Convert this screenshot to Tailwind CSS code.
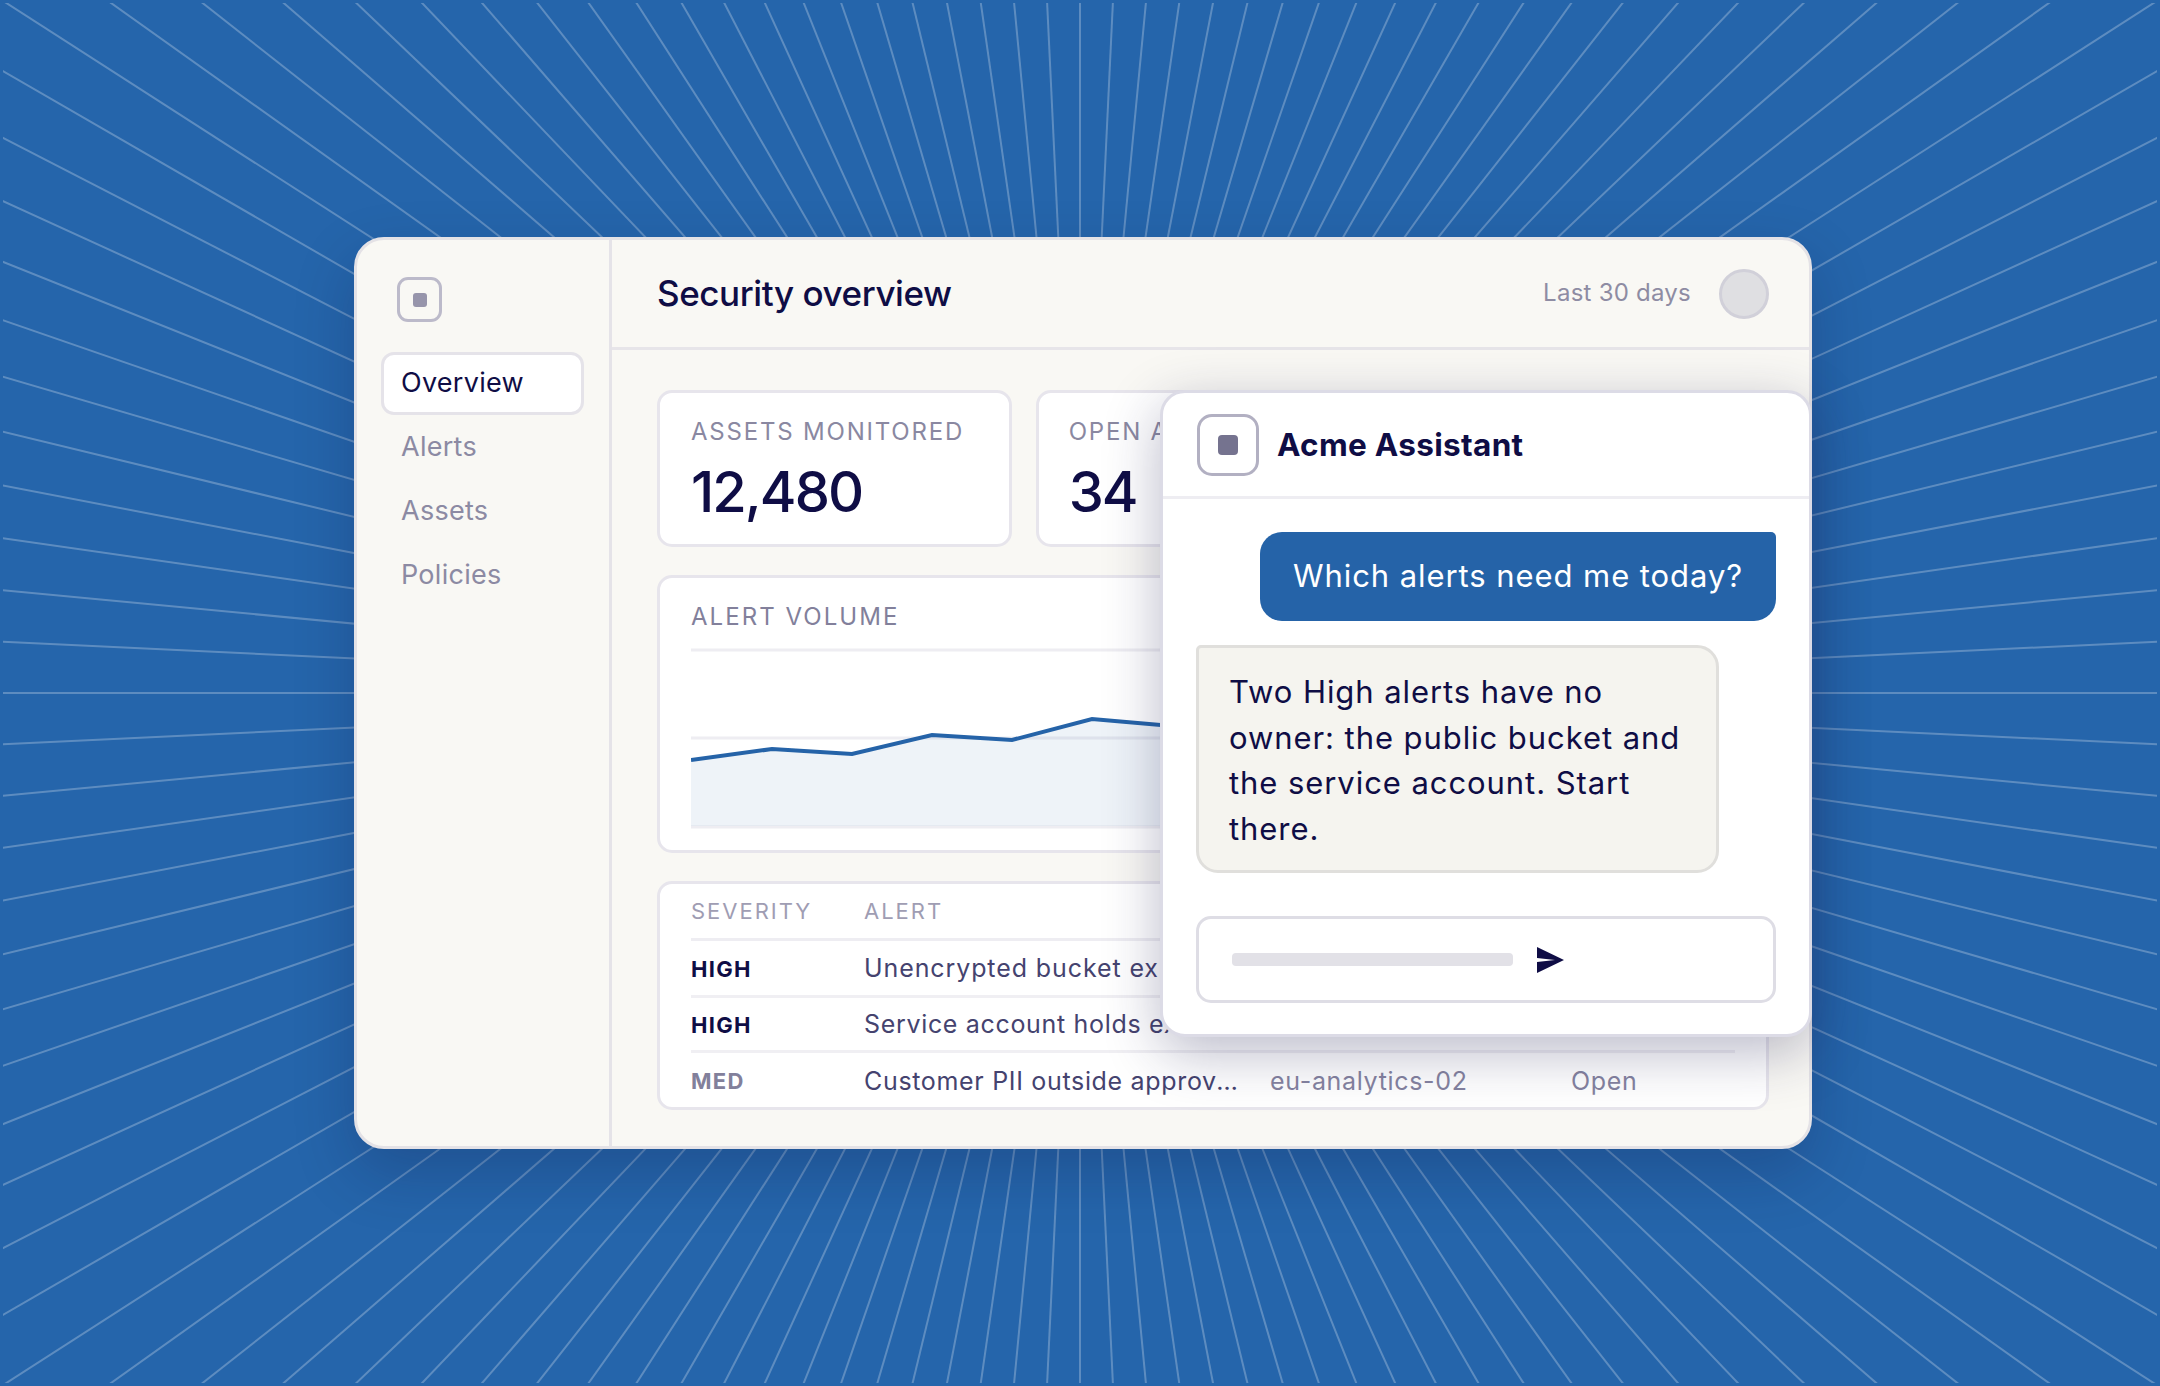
<!DOCTYPE html>
<html lang="en">
<head>
  <meta charset="UTF-8" />
  <title>Security overview</title>
  <script src="https://cdn.jsdelivr.net/npm/@tailwindcss/browser@4"></script>
</head>
<body class="bg-[#2565ab] w-[2160px] h-[1386px] overflow-hidden relative font-['Inter',sans-serif] text-[#0f0d45]">
  <!-- rays -->
  <svg id="rays" class="absolute inset-0" width="2160" height="1386"></svg>

  <main class="relative pl-[354px] pt-[237px]">
    <div class="relative flex w-[1458px] h-[912px] rounded-[30px] border-[3px] border-[#e4e2e6] bg-[#f9f8f4] shadow-[0_24px_60px_rgba(12,20,60,0.22)]">

      <!-- sidebar -->
      <aside class="w-[255px] shrink-0 border-r-[3px] border-[#e5e3e8] pl-[24px] pt-[37px]">
        <div class="ml-[16px] w-[45px] h-[45px] rounded-[11px] border-[3px] border-[#bcbaca] flex items-center justify-center">
          <div class="w-[14px] h-[14px] rounded-[3px] bg-[#9795ab]"></div>
        </div>
        <nav class="mt-[30px] flex flex-col gap-[2px] text-[27px] tracking-[0.01em] text-[#8c8aa3]">
          <a class="w-[203px] h-[63px] flex items-center pl-[17px] rounded-[13px] border-[3px] border-[#e5e3e9] bg-white text-[#0f0d45]">Overview</a>
          <a class="h-[62px] flex items-center pl-[20px] pb-[2px]">Alerts</a>
          <a class="h-[62px] flex items-center pl-[20px] pb-[2px]">Assets</a>
          <a class="h-[62px] flex items-center pl-[20px] pb-[2px]">Policies</a>
        </nav>
      </aside>

      <div class="flex-1 min-w-0">
        <!-- header -->
        <header class="h-[110px] border-b-[3px] border-[#e7e5e9] flex items-center pl-[45px] pr-[40px]">
          <h1 class="text-[35px] font-medium tracking-[-0.012em]">Security overview</h1>
          <span class="ml-auto pb-[2px] text-[24px] tracking-[0.01em] text-[#8e8ca3]">Last 30 days</span>
          <div class="ml-[28px] w-[50px] h-[50px] rounded-full bg-[#dfdfe2] border-[3px] border-[#d1d0d9]"></div>
        </header>

        <div class="pl-[45px] pr-[40px] pt-[40px]">
          <!-- stat cards -->
          <div class="grid grid-cols-3 gap-[24px]">
            <div class="h-[157px] rounded-[15px] border-[3px] border-[#e7e5ec] bg-white pl-[31px] pt-[24px]">
              <div class="text-[24px] leading-[30px] tracking-[0.075em] text-[#8a88a1]">ASSETS MONITORED</div>
              <div class="mt-[12px] text-[56px] leading-[66px] font-medium tracking-[-0.035em]">12,480</div>
            </div>
            <div class="h-[157px] rounded-[15px] border-[3px] border-[#e7e5ec] bg-white pl-[30px] pt-[24px]">
              <div class="text-[24px] leading-[30px] tracking-[0.075em] text-[#8a88a1]">OPEN ALERTS</div>
              <div class="mt-[12px] text-[56px] leading-[66px] font-medium tracking-[-0.035em]">34</div>
            </div>
            <div class="h-[157px] rounded-[15px] border-[3px] border-[#e7e5ec] bg-white"></div>
          </div>

          <!-- alert volume -->
          <section class="mt-[28px] h-[278px] rounded-[15px] border-[3px] border-[#e7e5ec] bg-white px-[31px] pt-[24px]">
            <div class="text-[24px] leading-[30px] tracking-[0.085em] text-[#82809b]">ALERT VOLUME</div>
            <svg class="mt-[16px] block" width="1044" height="181" viewBox="0 0 1044 181">
              <path d="M0 2H1044M0 90H1044M0 179H1044" fill="none" stroke="#eeedf2" stroke-width="3" />
              <path d="M0 112L81 101L161 106L241 87L321 92L401 71L481 78L561 62L641 70L721 48L801 56L881 36L961 44L1044 24V178H0Z" fill="#2563a8" fill-opacity="0.08" />
              <path d="M0 112L81 101L161 106L241 87L321 92L401 71L481 78L561 62L641 70L721 48L801 56L881 36L961 44L1044 24" fill="none" stroke="#2563a8" stroke-width="4" />
            </svg>
          </section>

          <!-- alerts table -->
          <section class="mt-[28px] h-[229px] rounded-[15px] border-[3px] border-[#e7e5ec] bg-white px-[31px]">
            <div class="h-[57px] grid grid-cols-[173px_1fr] items-center border-b-[3px] border-[#eeedf2] text-[22px] tracking-[0.09em] text-[#9f9db3]">
              <span>SEVERITY</span><span>ALERT</span>
            </div>
            <div class="h-[57px] pt-[2px] grid grid-cols-[173px_1fr] items-center border-b-[3px] border-[#f0eff3] text-[25px] tracking-[0.036em] text-[#45436f]">
              <span class="text-[22px] font-bold tracking-[0.06em] text-[#0f0d45]">HIGH</span>
              <span class="truncate">Unencrypted bucket ex</span>
            </div>
            <div class="h-[55px] pt-[2px] grid grid-cols-[173px_1fr] items-center border-b-[3px] border-[#f0eff3] text-[25px] tracking-[0.027em] text-[#45436f]">
              <span class="text-[22px] font-bold tracking-[0.06em] text-[#0f0d45]">HIGH</span>
              <span class="truncate">Service account holds excess</span>
            </div>
            <div class="h-[54px] pt-[3px] grid grid-cols-[173px_406px_301px_1fr] items-center text-[25px] tracking-[0.027em] text-[#45436f]">
              <span class="text-[22px] font-bold tracking-[0.06em] text-[#82809b]">MED</span>
              <span class="truncate pr-[24px]">Customer PII outside approved region</span>
              <span class="text-[#8583a0]">eu-analytics-02</span><span class="text-[#8583a0]">Open</span>
            </div>
          </section>
        </div>
      </div>

      <!-- assistant panel sits over the dashboard -->
      <div class="absolute left-[803px] top-[150px] w-[652px] h-[647px] rounded-[25px] border-[3px] border-[#dcdbe6] bg-white shadow-[0_16px_56px_rgba(30,30,80,0.3)]">
        <div class="h-[106px] border-b-[3px] border-[#eeedf2] flex items-center pl-[34px]">
          <div class="w-[62px] h-[62px] rounded-[15px] border-[3px] border-[#b2b0c2] flex items-center justify-center">
            <div class="w-[20px] h-[20px] rounded-[4px] bg-[#75738f]"></div>
          </div>
          <span class="ml-[18px] text-[31.5px] font-bold tracking-[0.01em]">Acme Assistant</span>
        </div>
        <div class="pl-[33px] pr-[33px] pt-[33px]">
          <div class="ml-auto w-[516px] h-[89px] rounded-[22px] rounded-tr-[5px] bg-[#2563a8] text-white text-[31px] tracking-[0.03em] flex items-center justify-center">Which alerts need me today?</div>
          <div class="mt-[24px] w-[523px] h-[228px] rounded-[22px] rounded-tl-[5px] border-[3px] border-[#e0dfdc] bg-[#f5f4ef] pl-[30px] pt-[21px] text-[31px] leading-[45.5px] tracking-[0.03em]">Two High alerts have no owner: the public bucket and the service account. Start there.</div>
          <div class="mt-[43px] h-[87px] rounded-[15px] border-[3px] border-[#dedde5] flex items-center pl-[33px]">
            <div class="w-[281px] h-[13px] rounded-[4px] bg-[#e2e1e7]"></div>
            <svg class="ml-[24px]" width="27" height="26" viewBox="0 0 27 26"><path d="M0 0L27 13L0 26V15L18 13L0 11Z" fill="#0f0d45" /></svg>
          </div>
        </div>
      </div>
    </div>
  </main>

  <script>
    // 132 rays out of the middle of the page
    const rays = document.getElementById("rays");
    let markup = '<clipPath id="rayClip"><rect x="3" y="3" width="2154" height="1380" /></clipPath><g clip-path="url(#rayClip)" stroke="#ffffff" stroke-opacity="0.26" stroke-width="2">';
    for (let i = 0; i < 132; i++) {
      const a = i * Math.PI * 2 / 132;
      markup += `<line x1="${1080 + 300 * Math.cos(a)}" y1="${693 + 300 * Math.sin(a)}" x2="${1080 + 1500 * Math.cos(a)}" y2="${693 + 1500 * Math.sin(a)}" />`;
    }
    rays.innerHTML = markup + '</g>';
  </script>
</body>
</html>
